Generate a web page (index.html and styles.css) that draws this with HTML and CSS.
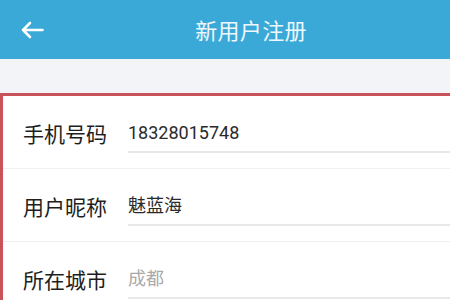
FILE: index.html
```html
<!DOCTYPE html>
<html lang="zh-CN">
<head>
<meta charset="utf-8">
<title>新用户注册</title>
<link rel="stylesheet" href="styles.css">
</head>
<body>
<div class="page">
  <header class="bar">
    <div class="back">
      <svg width="24" height="18" viewBox="0 0 24 18" aria-hidden="true">
        <path d="M22.5 9 H3 M10 2 L3 9 L10 16" fill="none" stroke="#ffffff" stroke-width="2.6" stroke-linecap="round" stroke-linejoin="round"/>
      </svg>
    </div>
    <h1 class="title">新用户注册</h1>
  </header>
  <div class="gap"></div>
  <form class="form">
    <div class="row">
      <span class="label">手机号码</span>
      <span class="field">18328015748</span>
    </div>
    <div class="row">
      <span class="label">用户昵称</span>
      <span class="field">魅蓝海</span>
    </div>
    <div class="row">
      <span class="label">所在城市</span>
      <span class="field placeholder">成都</span>
    </div>
  </form>
</div>
</body>
</html>
```

FILE: styles.css
```css
html, body {
  margin: 0;
  padding: 0;
}
body {
  width: 450px;
  height: 300px;
  overflow: hidden;
  background: #ffffff;
  font-family: Roboto, "Noto Sans CJK SC", sans-serif;
}
.page {
  width: 450px;
}
.bar {
  height: 59px;
  background: #3ba9d8;
  display: flex;
  align-items: center;
}
.back {
  width: 32px;
  padding-left: 20px;
  display: flex;
  align-items: center;
  height: 59px;
}
.title {
  flex: 1;
  margin: 0;
  text-align: center;
  font-family: "Noto Sans CJK SC", sans-serif;
  font-weight: 400;
  font-size: 22px;
  color: #eef8fc;
  line-height: 59px;
  letter-spacing: 0.3px;
}
.gap {
  height: 34px;
  background: #f2f4f7;
}
.form {
  margin: 0;
  border-top: 3px solid #c8535a;
  border-left: 3px solid #c8535a;
  background: #ffffff;
}
.row {
  height: 72px;
  border-bottom: 1px solid #efefef;
  display: flex;
  align-items: flex-start;
}
.label {
  margin: 22px 0 0 20px;
  width: 84px;
  line-height: 30px;
  font-family: "Noto Sans CJK SC", sans-serif;
  font-size: 21px;
  color: #1e1e1e;
  white-space: nowrap;
}
.field {
  flex: 1;
  margin: 22px 0 0 21px;
  line-height: 30px;
  height: 30px;
  padding-bottom: 3px;
  border-bottom: 2px solid #e8e8e8;
  font-size: 18px;
  color: #2a2a2a;
}
.placeholder {
  color: #a9a9a9;
}
```
